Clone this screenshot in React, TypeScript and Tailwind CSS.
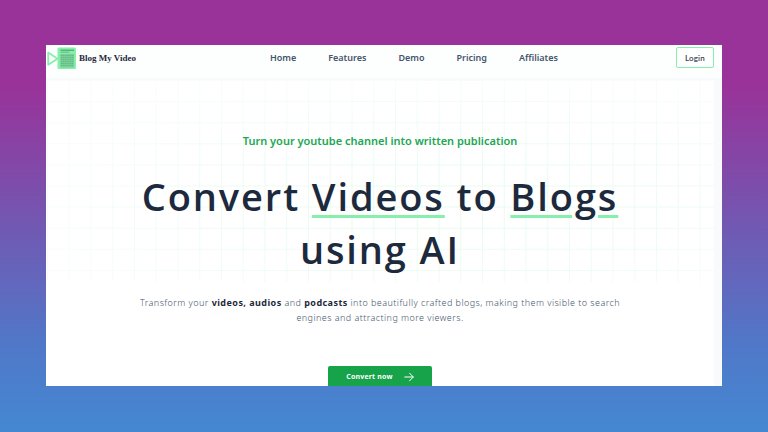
const links = [
  { href: "#home", label: "Home" },
  { href: "#features", label: "Features" },
  { href: "#demo", label: "Demo" },
  { href: "#pricing", label: "Pricing" },
  { href: "#affiliates", label: "Affiliates" },
];

function LogoMark() {
  return (
    <svg viewBox="0 0 30 23" className="h-[23px] w-[30px] shrink-0" aria-hidden="true">
      <path d="M2.2 5.6 L11.5 11.7 L2.2 17.8 Z" fill="#fff" stroke="#86efac" strokeWidth="1.8" strokeLinejoin="round" />
      <rect x="11.5" y="0.5" width="18.5" height="21.5" rx="1.5" fill="#86efac" />
      <path d="M14.5 3.2 H28" stroke="#4b9466" strokeWidth="1" />
      <path d="M14.5 5.2 H23.5" stroke="#63b07e" strokeWidth="0.9" />
      <rect x="14.5" y="7" width="13.5" height="13.5" fill="#78cf98" />
      <path
        d="M14.5 8.5 H28 M14.5 10.5 H28 M14.5 12.5 H28 M14.5 14.5 H28 M14.5 16.5 H28 M14.5 18.5 H28"
        stroke="#62b680"
        strokeWidth="0.8"
        strokeDasharray="1.6 0.6"
      />
    </svg>
  );
}

function ArrowRight() {
  return (
    <svg
      viewBox="0 0 10 10"
      className="size-[10px]"
      fill="none"
      stroke="currentColor"
      strokeWidth="1"
      strokeLinecap="round"
      strokeLinejoin="round"
      aria-hidden="true"
    >
      <path d="M0.8 5 H9.2 M5.6 1.2 L9.3 5 L5.6 8.8" />
    </svg>
  );
}

function GridBackdrop() {
  const columns = Array.from({ length: 31 }, (_, i) => 1 + i * 21.75);
  const rows = Array.from({ length: 10 }, (_, i) => i * 21.1);
  return (
    <svg
      viewBox="0 0 668 202"
      preserveAspectRatio="none"
      className="absolute inset-x-0 top-0 -z-10 h-[202px] w-full"
      aria-hidden="true"
    >
      <defs>
        <radialGradient id="grid-fade" cx="0.6" cy="0.6" r="0.65">
          <stop offset="0" stopColor="#e6fbee" />
          <stop offset="0.6" stopColor="#effcf5" />
          <stop offset="1" stopColor="#f8fdfb" />
        </radialGradient>
      </defs>
      <path
        fill="url(#grid-fade)"
        d={columns.map((x) => `M${x} 0h1v202h-1z`).join("") + rows.map((y) => `M0 ${y}h668v1h-668z`).join("")}
      />
    </svg>
  );
}

function Header() {
  return (
    <header className="flex h-[35px] shrink-0 items-start justify-between border-b-2 border-slate-50 bg-[#fdfffe] pt-0.5 pr-2">
      <a
        href="#home"
        className="flex items-center gap-[3px] font-['Liberation_Serif',serif] text-[9px] font-bold text-gray-800"
      >
        <LogoMark />
        Blog My Video
      </a>
      <nav
        aria-label="Main"
        className="flex gap-8 pt-1 pl-4 text-[9px] leading-[14px] font-semibold text-slate-600"
      >
        {links.map((l) => (
          <a key={l.href} href={l.href}>
            {l.label}
          </a>
        ))}
      </nav>
      <button
        type="button"
        className="h-[21px] rounded-xs border border-[#86efac] bg-white px-2 font-['Lato',sans-serif] text-[8px] font-semibold tracking-wide text-gray-700"
      >
        Login
      </button>
    </header>
  );
}

function Hero() {
  return (
    <main className="flex grow">
      <section className="relative isolate flex grow flex-col items-center pt-[53px] text-center">
        <GridBackdrop />
        <p className="text-[11px] leading-4 font-semibold text-[#22a653]">
          Turn your youtube channel into written publication
        </p>
        <h1 className="mt-[21px] max-w-[540px] font-['Open_Sans',sans-serif] text-[38px] leading-[53px] font-semibold tracking-wider text-slate-800">
          Convert{" "}
          <span className="underline decoration-[#86efac] decoration-3 underline-offset-4">Videos</span> to{" "}
          <span className="underline decoration-[#86efac] decoration-3 underline-offset-4">Blogs</span> using AI
        </h1>
        <p className="mt-[19px] max-w-[500px] text-[9px] leading-[15px] font-light tracking-wider text-slate-600">
          Transform your <strong className="font-bold text-slate-800">videos, audios</strong> and{" "}
          <strong className="font-bold text-slate-800">podcasts</strong> into beautifully crafted blogs, making them
          visible to search engines and attracting more viewers.
        </p>
        <button
          type="button"
          className="mt-[41px] flex h-7 shrink-0 items-center gap-[11px] rounded-xs bg-[#16a34a] px-[18px] pb-1.5 text-[7px] font-bold tracking-wide text-white"
        >
          Convert now
          <ArrowRight />
        </button>
      </section>
      <div className="w-2 bg-slate-50" />
    </main>
  );
}

export default function App() {
  return (
    <div className="flex h-screen bg-linear-to-b/srgb from-[#993399] from-20% via-[#5078c8] via-80% to-[#4488d2] px-[46px] pt-[45px] pb-[46px] font-['Noto_Sans','Open_Sans',sans-serif]">
      <div className="flex min-w-0 grow flex-col overflow-hidden bg-white">
        <Header />
        <Hero />
      </div>
    </div>
  );
}
